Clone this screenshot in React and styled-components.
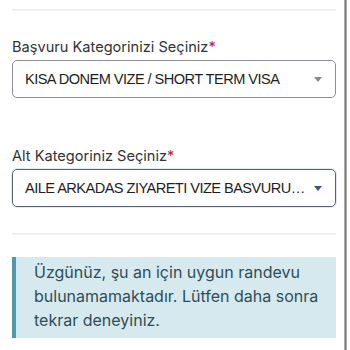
import styled, { createGlobalStyle } from 'styled-components';

const GlobalStyle = createGlobalStyle`
  html, body {
    margin: 0;
    padding: 0;
    background: #fff;
  }
  body {
    font-family: Inter, "Noto Sans", sans-serif;
    color: #333;
  }
`;

const Page = styled.div`
  display: flex;
  width: 350px;
  height: 350px;
  overflow: hidden;
`;

const Content = styled.div`
  width: 324px;
  padding: 9px 8px 0 12px;
  display: flex;
  flex-direction: column;
`;

const Rail = styled.div`
  width: 3px;
  height: 100%;
  background: #7a7a7a;
  border-left: 1px solid #aaa;
  border-right: 1px solid #aaa;
  box-sizing: border-box;
`;

const Divider = styled.hr`
  width: 100%;
  height: 2px;
  border: 0;
  margin: 0;
  background: #efefef;
`;

const Field = styled.div`
  display: flex;
  flex-direction: column;
  padding: ${(p) => p.$pad || '26px 0 0'};
`;

const Label = styled.label`
  font-size: 14.6px;
  line-height: 20px;
  color: #333;
  margin-bottom: 3px;

  span {
    color: #b0243a;
  }
`;

const Select = styled.div`
  height: 38px;
  box-sizing: border-box;
  border: 1px solid ${(p) => (p.$focused ? '#5a6170' : '#8a8f98')};
  border-radius: 5px;
  box-shadow: ${(p) => (p.$focused ? '0 0 0 1px #e4e7ee' : 'none')};
  display: flex;
  align-items: center;
  padding: 0 10px 0 12px;
  gap: 3px;
  font-family: "Liberation Sans", Arial, sans-serif;
  font-size: 14.6px;
  letter-spacing: -0.55px;
  color: #1e1e1e;
`;

const Value = styled.div`
  flex: 1;
  white-space: nowrap;
  overflow: hidden;
  text-overflow: ellipsis;
`;

const Caret = styled.div`
  width: 0;
  height: 0;
  margin: 0 3px 0 0;
  border-left: 4.5px solid transparent;
  border-right: 4.5px solid transparent;
  border-top: 5px solid ${(p) => p.$color};
`;

const Alert = styled.div`
  margin-top: 22px;
  background: #d6e9ef;
  border-left: 4px solid #4d9aac;
  padding: 3px 16px 6px 18px;
  font-size: 16px;
  line-height: 24px;
  color: #2f4d57;
`;

export default function App() {
  return (
    <>
      <GlobalStyle />
      <Page>
        <Content>
          <Divider />
          <Field $pad="26px 0 33px">
            <Label>
              Başvuru Kategorinizi Seçiniz<span>*</span>
            </Label>
            <Select>
              <Value>KISA DONEM VIZE / SHORT TERM VISA</Value>
              <Caret $color="#8a8a8a" />
            </Select>
          </Field>
          <Field $pad="15px 0 26px">
            <Label>
              Alt Kategoriniz Seçiniz<span>*</span>
            </Label>
            <Select $focused>
              <Value>AILE ARKADAS ZIYARETI VIZE BASVURUSU / FAMILY FRIEND VISIT</Value>
              <Caret $color="#3e4f8c" />
            </Select>
          </Field>
          <Divider />
          <Alert>
            Üzgünüz, şu an için uygun randevu bulunamamaktadır. Lütfen daha sonra tekrar deneyiniz.
          </Alert>
        </Content>
        <Rail />
      </Page>
    </>
  );
}
